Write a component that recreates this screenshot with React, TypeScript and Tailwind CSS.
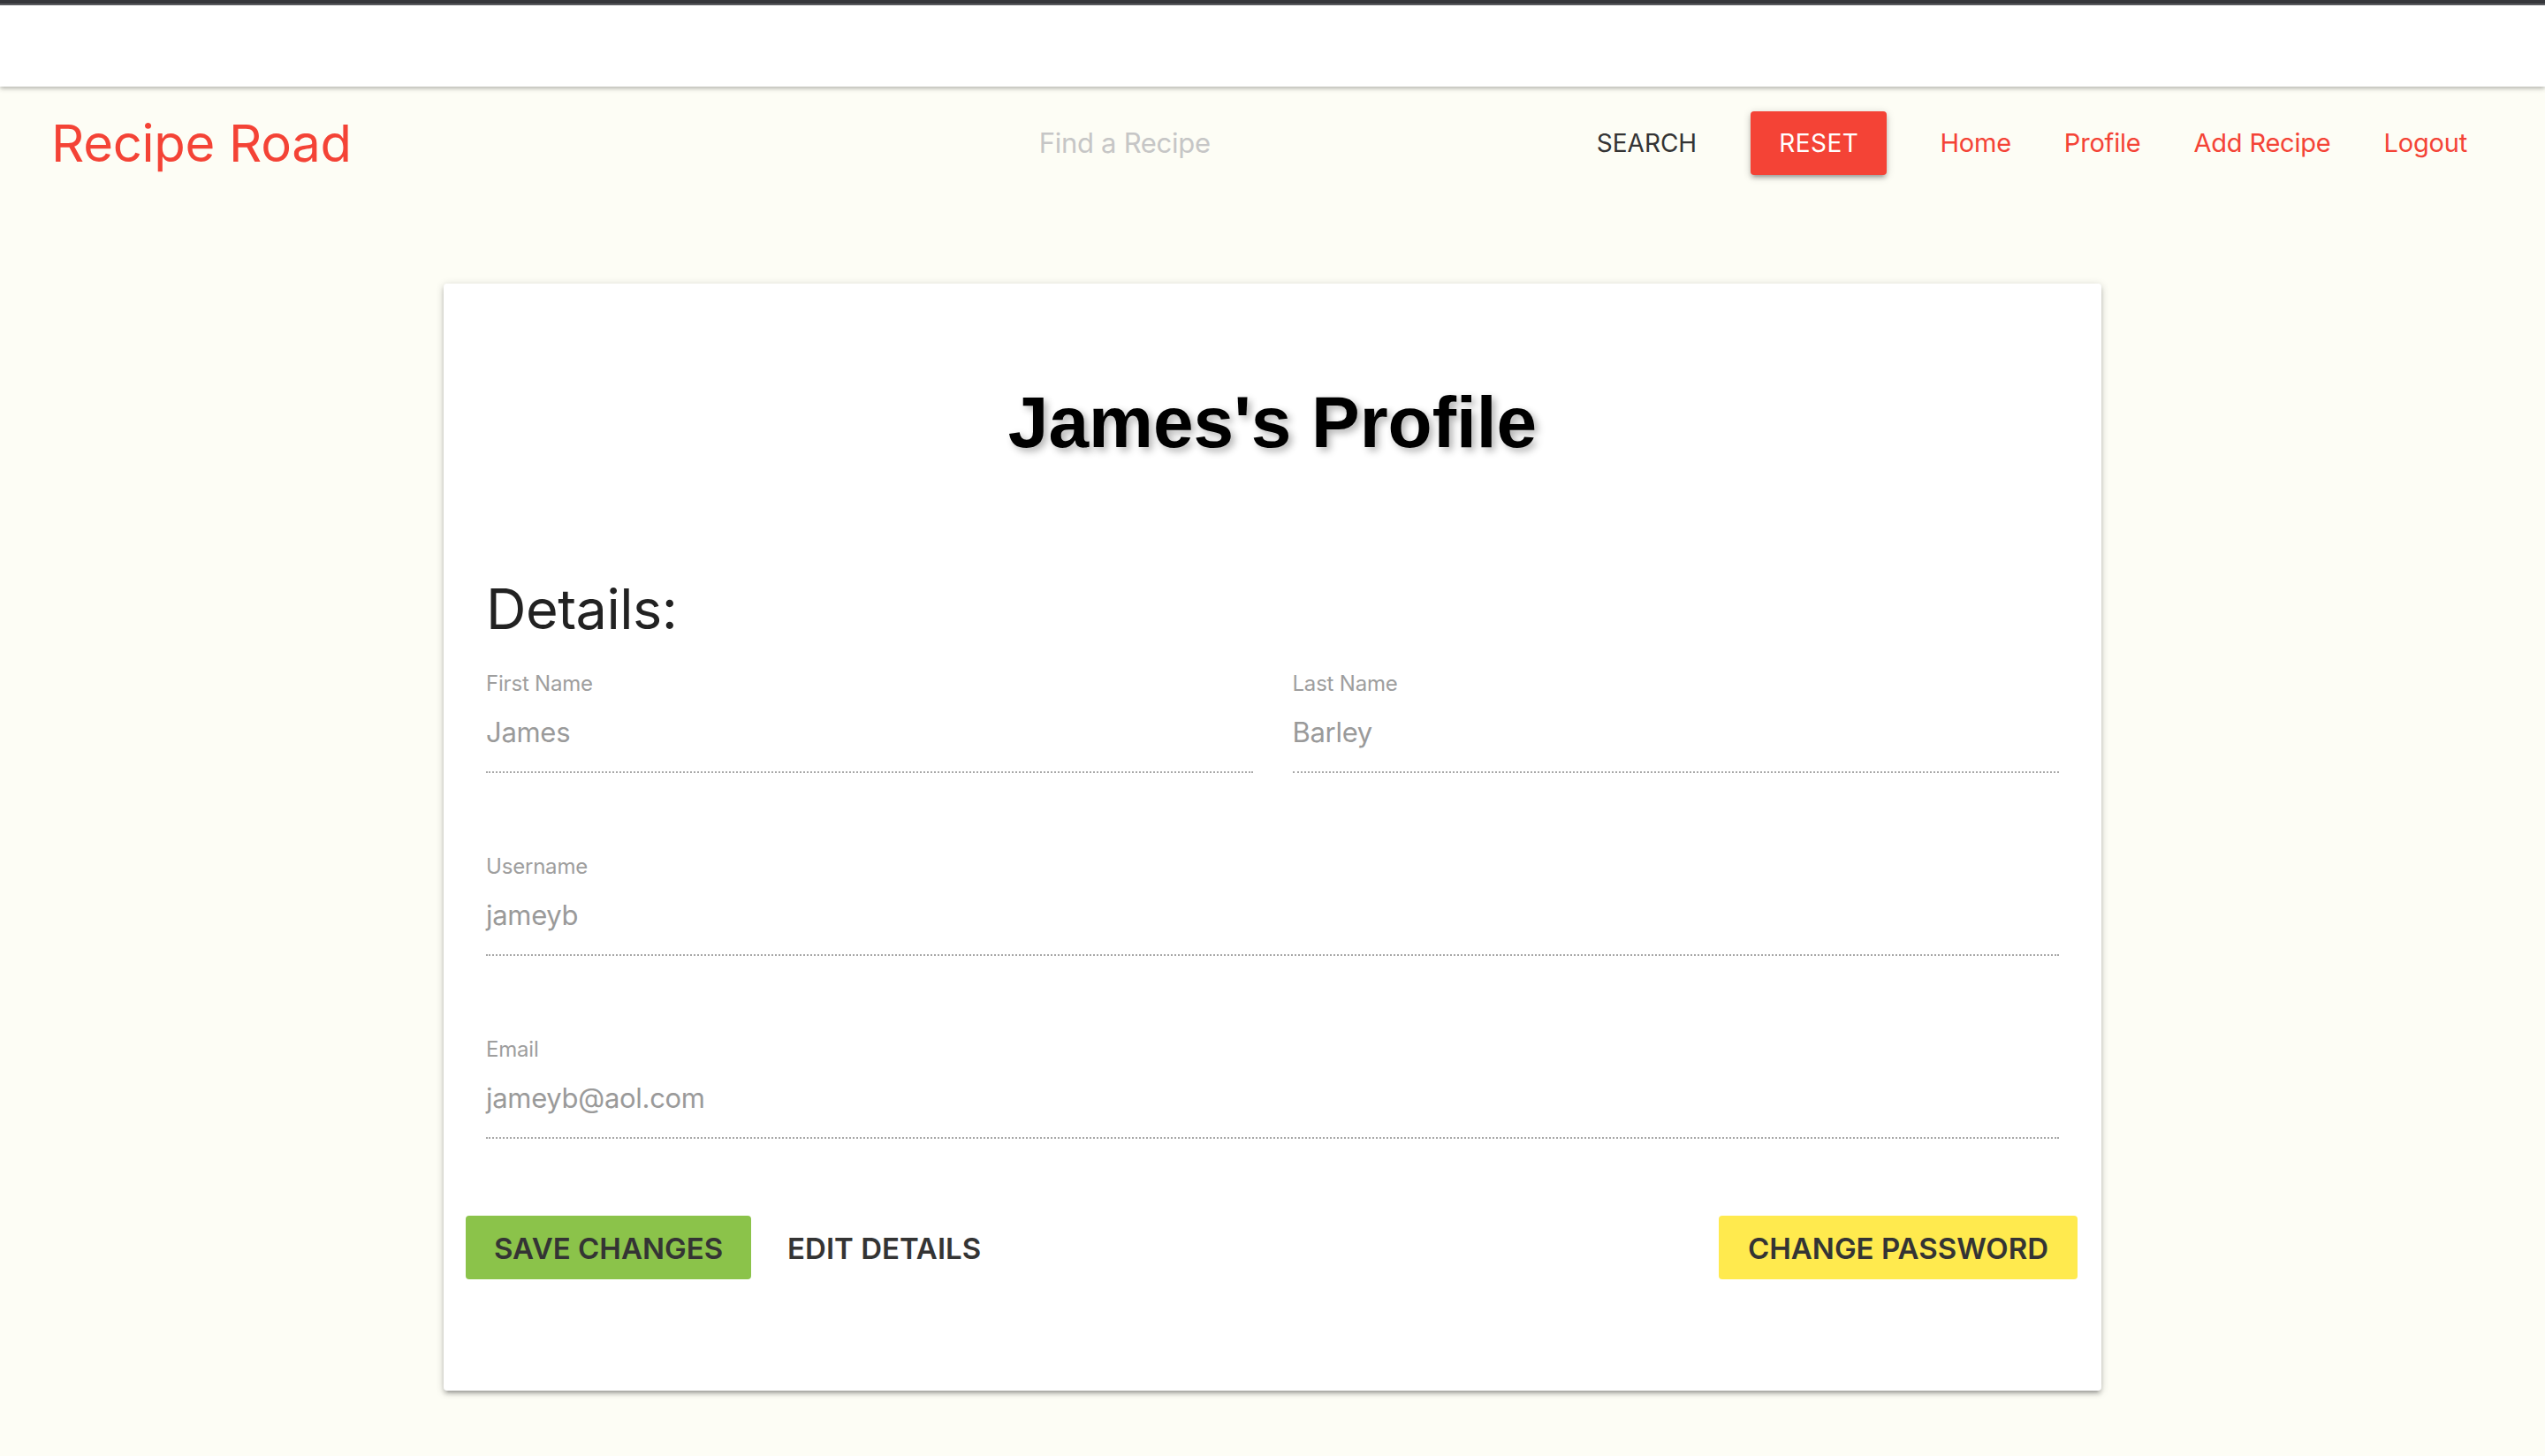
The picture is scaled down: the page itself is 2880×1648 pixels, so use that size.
import React from 'react';

const sans = "font-['Inter','Noto_Sans',sans-serif]";

type FieldProps = { label: string; value: string; className?: string };

const Field: React.FC<FieldProps> = ({ label, value, className }) => (
  <div className={className}>
    <div className="text-[24px] leading-[32px] tracking-[-0.2px] text-[#9e9e9e]">{label}</div>
    <div className="mt-[19px] text-[31px] leading-[40px] tracking-[-0.3px] text-[#9a9a9a] pb-[24px] border-b-2 border-dotted border-[#a8a8a8]">
      {value}
    </div>
  </div>
);

const NAV_LINKS = ['Home', 'Profile', 'Add Recipe', 'Logout'];

export default function App() {
  return (
    <div className={`min-h-[1648px] bg-[#fdfdf5] ${sans}`}>
      {/* window edge + white strip */}
      <div className="h-[4px] bg-[#36373b]" />
      <div className="h-[2px] bg-[#5c5d61]" />
      <div className="relative h-[92px] bg-white shadow-[0_2px_5px_rgba(0,0,0,0.3)]" />

      {/* Nav */}
      <nav className="h-[128px] flex items-center pl-[58px] pr-[58px]">
        <a className="text-[58px] leading-none tracking-[-0.3px] text-[#f44336]">Recipe Road</a>
        <div className="ml-auto flex items-center">
          <input
            placeholder="Find a Recipe"
            className="w-[599px] bg-transparent outline-none text-[31px] tracking-[-0.3px] text-[#333] placeholder:text-[#c6c6c6]"
          />
          <button className="h-[72px] px-[32px] text-[28px] text-[#343434]">SEARCH</button>
          <button className="ml-[29px] h-[72px] px-[32px] rounded-[4px] bg-[#f44336] text-[28px] tracking-[0.5px] text-white shadow-[0_4px_4px_0_rgba(0,0,0,0.14),0_6px_2px_-4px_rgba(0,0,0,0.12),0_2px_10px_0_rgba(0,0,0,0.2)]">
            RESET
          </button>
          <ul className="ml-[30px] flex items-center">
            {NAV_LINKS.map((l) => (
              <li key={l}>
                <a className="px-[30px] text-[29px] tracking-[-0.2px] text-[#f44336]">{l}</a>
              </li>
            ))}
          </ul>
        </div>
      </nav>

      {/* Profile card */}
      <div className="mt-[95px] mx-auto w-[1876px] h-[1253px] bg-white rounded-[4px] shadow-[0_4px_4px_0_rgba(0,0,0,0.14),0_6px_2px_-4px_rgba(0,0,0,0.12),0_2px_10px_0_rgba(0,0,0,0.2)]">
        <h3 className="pt-[107px] text-center font-['Liberation_Sans',Arial,sans-serif] font-bold text-[82px] leading-[100px] text-black [text-shadow:4px_4px_8px_rgba(0,0,0,0.3)]">
          James's Profile
        </h3>

        <h4 className="mt-[121px] px-[48px] text-[63px] leading-[80px] tracking-[-0.5px] text-[#222]">Details:</h4>

        <div className="mt-[29px] px-[48px]">
          <div className="grid grid-cols-2 gap-x-[45px]">
            <Field label="First Name" value="James" />
            <Field label="Last Name" value="Barley" />
          </div>
          <Field className="mt-[90px]" label="Username" value="jameyb" />
          <Field className="mt-[90px]" label="Email" value="jameyb@aol.com" />
        </div>

        <div className="mt-[87px] flex items-center justify-between pl-[25px] pr-[27px]">
          <div className="flex items-center">
            <button className="h-[72px] pt-[4px] px-[32px] rounded-[4px] bg-[#8bc34a] text-[33px] font-semibold text-[#343434]">
              SAVE CHANGES
            </button>
            <button className="ml-[9px] h-[72px] pt-[4px] px-[32px] text-[33px] font-semibold text-[#343434]">
              EDIT DETAILS
            </button>
          </div>
          <button className="h-[72px] pt-[4px] px-[33px] rounded-[4px] bg-[#ffea4e] text-[33px] font-semibold text-[#343434]">
            CHANGE PASSWORD
          </button>
        </div>
      </div>
    </div>
  );
}
